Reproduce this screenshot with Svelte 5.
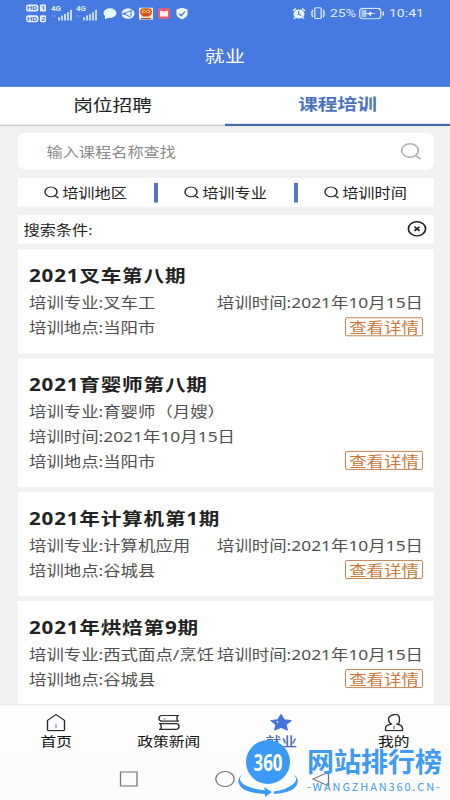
<script lang="ts">
  type Course = { title: string; major: string; date: string; place: string; stacked?: boolean };

  const filters = ['培训地区', '培训专业', '培训时间'];
  const date = '2021年10月15日';

  const courses: Course[] = [
    { title: '2021叉车第八期', major: '叉车工', date, place: '当阳市' },
    { title: '2021育婴师第八期', major: '育婴师（月嫂）', date, place: '当阳市', stacked: true },
    { title: '2021年计算机第1期', major: '计算机应用', date, place: '谷城县' },
    { title: '2021年烘焙第9期', major: '西式面点/烹饪', date, place: '谷城县' }
  ];

  let activeTab = $state(1);
  let activeNav = $state(2);
  const tabs = ['岗位招聘', '课程培训'];
  const nav = ['首页', '政策新闻', '就业', '我的'];
</script>

{#snippet signal()}
  <svg class="signal" width="22" height="20" viewBox="0 0 22 20">
    <text x="0" y="8" font-size="8" font-weight="700" fill="#dcebff">4G</text>
    <path d="M8 19v-4M11 19v-6M14 19v-8M17 19v-10M20 19V6" stroke="#dcebff" stroke-width="1.7" />
    <path d="M1.5 12.5v2M4 12.5v2" stroke="#8db3f5" stroke-width="1" />
  </svg>
{/snippet}

<div class="viewport">
  <div class="screen">
    <header>
      <div class="status">
        <svg class="hd" width="21" height="24" viewBox="0 0 21 24">
          <g fill="#e6f0ff">
            <rect x="0" y="1.5" width="12.5" height="8.5" rx="2.5" />
            <rect x="14" y="1.5" width="6" height="8.5" rx="1.5" />
            <rect x="0" y="14.5" width="12.5" height="8.5" rx="2.5" />
            <rect x="14" y="14.5" width="6" height="8.5" rx="1.5" />
          </g>
          <g fill="#477ae0" font-size="7.5" font-weight="700">
            <text x="1" y="8.5">HD</text><text x="14.9" y="8.5">1</text>
            <text x="1" y="21.5">HD</text><text x="14.9" y="21.5">2</text>
          </g>
        </svg>
        {@render signal()}
        {@render signal()}
        <svg class="app" width="14" height="15" viewBox="0 0 14 15">
          <ellipse cx="7" cy="7" rx="6.5" ry="5.8" fill="#e3fbff" /><path d="M2 10l0 4.5 4-2z" fill="#e3fbff" />
        </svg>
        <svg class="app" width="14" height="15" viewBox="0 0 14 15">
          <circle cx="7" cy="7.5" r="6.5" fill="#e9f4ff" />
          <path d="M3 7.5L10 4M3 7.5l6 4M10 4v7M0 8h4M10 4l2-2" stroke="#477ae0" stroke-width="1.1" fill="none" />
          <circle cx="3.5" cy="7.5" r="1.3" fill="#477ae0" />
        </svg>
        <svg class="app" width="14" height="15" viewBox="0 0 14 15">
          <rect width="14" height="15" fill="#f5e9d3" />
          <path d="M1 5q0-4 4-4h4q4 0 4 4t-3 6H4Q1 9 1 5z" fill="#d45c26" />
          <circle cx="4.7" cy="5" r="2" fill="#ffc65c" /><circle cx="9.3" cy="5" r="2" fill="#ffc65c" />
          <path d="M4 9h6M2 13.5h10" stroke="#c9401f" stroke-width="1.4" />
          <circle cx="5" cy="5" r=".8" fill="#722914" /><circle cx="9" cy="5" r=".8" fill="#722914" />
        </svg>
        <svg class="app mail" width="12" height="15" viewBox="0 0 12 15">
          <rect y="1" width="12" height="13" rx="2.5" fill="#ef5a6d" />
          <path d="M2 4h1l3 1L9 4h1v7H2z" fill="#fff0ee" />
        </svg>
        <svg class="app" width="12" height="15" viewBox="0 0 12 15">
          <path d="M6 .5l5.5 2V8q0 4-5.5 6.7Q.5 12 .5 8V2.5z" fill="#e9fbff" />
          <path d="M3 7.5l2.3 2.5L9 5" stroke="#4a72bb" stroke-width="1.3" fill="none" />
        </svg>

        <svg class="alarm" width="14" height="15" viewBox="0 0 14 15">
          <circle cx="7" cy="8" r="5.5" fill="#eaf6ff" />
          <path d="M1 4l3-2.5M13 4l-3-2.5M3 12.5l-1 1.5M11 12.5l1 1.5" stroke="#eaf6ff" stroke-width="1.6" />
          <path d="M6.7 4.5V8.5l2.5 1.5" stroke="#477ae0" stroke-width="1.2" fill="none" />
        </svg>
        <svg class="vibrate" width="16" height="16" viewBox="0 0 16 16" fill="none" stroke="#dcebff" stroke-width="1.3">
          <rect x="4.8" y="1.5" width="6.4" height="13" rx="1.2" />
          <path d="M2.5 4v2l-1 1 1 1.5-1 1.5 1 1V13M13.5 4v2l1 1-1 1.5 1 1.5-1 1V13" />
        </svg>
        <span class="percent">25%</span>
        <svg class="battery" width="26" height="15" viewBox="0 0 26 15">
          <rect x=".7" y="1.2" width="21" height="12.6" rx="3" fill="none" stroke="#dcebff" stroke-width="1.3" />
          <rect x="2.5" y="3" width="5" height="9" rx="1" fill="#a9c6fa" />
          <path d="M4.5 7.8l6-.8V4.300l2.500 2.500 5 .3-6 1V11l-2.500-2.500z" fill="#fff" />
          <path d="M24.2 5v5" stroke="#dcebff" stroke-width="1.5" />
        </svg>
        <span class="clock">10:41</span>
      </div>
      <h1>就业</h1>
    </header>

    <div class="tabs">
      {#each tabs as tab, i}
        <button class:active={activeTab === i} onclick={() => (activeTab = i)}>{tab}</button>
      {/each}
    </div>

    <main>
      <div class="search">
        <span>输入课程名称查找</span>
        <svg width="22" height="22" viewBox="0 0 22 22" fill="none" stroke="#b4b4b4" stroke-width="1.8">
          <circle cx="10" cy="9.5" r="8.3" /><path d="M15.5 15.5l5 4.5" />
        </svg>
      </div>

      <div class="filters">
        {#each filters as filter, i}
          {#if i > 0}<i class="divider"></i>{/if}
          <button>
            <svg width="15" height="16" viewBox="0 0 15 16" fill="none" stroke="#222" stroke-width="1.4">
              <circle cx="7" cy="7" r="6" /><path d="M11 11.5l3.5 3" />
            </svg>
            {filter}
          </button>
        {/each}
      </div>

      <div class="condition">
        <span>搜索条件:</span>
        <svg width="20" height="20" viewBox="0 0 20 20" fill="none" stroke="#222">
          <circle cx="10" cy="10" r="8.6" stroke-width="1.7" />
          <path d="M7.5 7.5l5 5M12.5 7.5l-5 5" stroke-width="1.9" />
        </svg>
      </div>

      {#each courses as course}
        <article>
          <h2>{course.title}</h2>
          <div class="row">
            <span>培训专业:{course.major}</span>
            {#if !course.stacked}<span>培训时间:{course.date}</span>{/if}
          </div>
          {#if course.stacked}
            <div class="row"><span>培训时间:{course.date}</span></div>
          {/if}
          <div class="row">
            <span>培训地点:{course.place}</span>
            <button class="detail">查看详情</button>
          </div>
        </article>
      {/each}
    </main>

    <nav>
      {#each nav as item, i}
        <button class:active={activeNav === i} onclick={() => (activeNav = i)}>
          <svg width="22" height="22" viewBox="0 0 22 22" fill="none" stroke="#2b2b2b" stroke-width="1.4" stroke-linejoin="round">
            {#if i === 0}
              <path d="M2.5 8.5L11 1.5l8.500 7v11.500q0 1-1 1h-15q-1 0-1-1z" />
              <path d="M11 13v5" stroke="#7da0e8" />
            {:else if i === 1}
              <path d="M21 2.5H4q-3 0-3 3.500t3 3.500h17M19.500 2.500q-1.500 3.500 0 7M1 12.500h17q3 0 3 3.500t-3 3.500H1M2.500 12.500q1.500 3.500 0 7" />
              <path d="M6.5 6v2.5" stroke="#7da0e8" />
            {:else if i === 2}
              <path d="M11 1.5l3 6.300 7 .9-5.100 4.800 1.300 6.800L11 17l-6.200 3.300 1.300-6.800L1 8.700l7-.9z" fill="#4472d8" stroke="#4472d8" />
              <path d="M6.5 10l2 .8" stroke="#fff" stroke-width="1.5" />
            {:else}
              <path d="M8.5 13Q5.500 11 5.500 7t5.500-5.500T16.500 7t-3 6q6 .5 6 5.500V21h-17v-2.500q0-5 6-5.500z" />
              <path d="M11 15v4" stroke="#777" />
            {/if}
          </svg>
          <span>{item}</span>
        </button>
      {/each}
    </nav>

    <div class="system">
      <svg width="20" height="20" viewBox="0 0 20 20"><rect x="1.5" y="1.5" width="16.5" height="17" /></svg>
      <svg width="20" height="20" viewBox="0 0 20 20"><circle cx="10" cy="10" r="9.2" /></svg>
      <svg width="20" height="20" viewBox="0 0 20 20"><path d="M17.5 1.5v17L2 10z" /></svg>
    </div>
  </div>

  <div class="watermark">
    <svg width="60" height="60" viewBox="0 0 60 60">
      <circle cx="30" cy="22" r="22" fill="#3b9af5" />
      <text x="30" y="31" text-anchor="middle" textLength="29" lengthAdjust="spacingAndGlyphs" font-size="24" font-weight="700" fill="#fff">360</text>
      <path d="M5.5 33.5Q-2 39 6 44.500 13 49 27 50.500L26 47 34 52 27 57V54Q10 53 4 48-4 40 5.500 33.500z" fill="#3b9af5" />
      <path d="M54.5 33.5Q62 39 54 45 47 50 36 51.500V54Q51 53 56.500 48 64 40 54.500 33.500z" fill="#3b9af5" />
    </svg>
    <div class="brand">
      <strong>网站排行榜</strong>
      <small>-WANGZHAN360.CN-</small>
    </div>
  </div>
</div>

<style>
  :global(body) {
    background: #fcfcfc;
  }
  .viewport {
    position: relative;
    width: 450px;
    height: 800px;
    overflow: hidden;
    font-family: 'Noto Sans', 'Noto Sans CJK SC', sans-serif;
  }
  /* tall 450x976 phone screen squeezed into 800px */
  .screen {
    display: flex;
    flex-direction: column;
    width: 450px;
    height: 976px;
    transform: scaleY(0.82);
    transform-origin: top;
    background: #fcfcfc;
  }
  button {
    padding: 0;
    border: 0;
    background: none;
    font: inherit;
    color: inherit;
  }
  svg {
    flex: none;
  }

  header {
    flex: none;
    height: 106px;
    background: #477ae0;
    color: #fff;
  }
  .status {
    display: flex;
    align-items: center;
    height: 32px;
    padding-left: 26px;
    color: #e3eeff;
    font-size: 14px;
    font-family: Roboto, sans-serif;
  }
  .signal { margin-left: 3.5px; }
  .app { margin-left: 4px; }
  .signal + .app { margin-left: 5px; }
  .mail { margin: 0 2px 0 5px; }
  .alarm { margin-left: 104px; }
  .vibrate { margin-left: 4px; }
  .percent { margin-left: 4px; width: 28px; }
  .battery { margin-left: 1px; }
  .clock { margin-left: 4px; }
  h1 {
    margin: 19px 0 0;
    font-size: 20px;
    line-height: 36px;
    font-weight: 400;
    text-align: center;
    letter-spacing: .5px;
  }

  .tabs {
    flex: none;
    display: flex;
    height: 47.5px;
    background: #fff;
  }
  .tabs button {
    flex: 1;
    padding-bottom: 2px;
    border-bottom: 2px solid #ccc;
    font-size: 19.7px;
    line-height: 42px;
    color: #222;
  }
  .tabs .active {
    border-bottom: 3px solid #4669ae;
    color: #4a72bd;
    font-weight: 700;
  }

  main {
    flex: none;
    height: 705px;
    box-sizing: border-box;
    padding: 8.5px 16.5px 0 17.5px;
    overflow: hidden;
    background: #f1f1f1;
    font-size: 16.2px;
    color: #222;
  }
  .search {
    display: flex;
    align-items: center;
    justify-content: space-between;
    height: 45px;
    padding: 0 12px 0 29px;
    border-radius: 8px;
    background: #fff;
    color: #8a8a8a;
  }
  .filters {
    display: flex;
    align-items: center;
    height: 35px;
    margin-top: 10px;
    background: #fff;
  }
  .filters button {
    flex: 1;
    display: flex;
    align-items: center;
    justify-content: center;
    gap: 3px;
  }
  .divider {
    width: 4px;
    height: 24px;
    background: #5579b8;
  }
  .condition {
    display: flex;
    align-items: center;
    justify-content: space-between;
    height: 35px;
    margin: 9.5px 0 7px;
    padding: 0 7px 0 6px;
    background: #fff;
  }

  article {
    margin-bottom: 5.5px;
    padding: 14px 10.5px 17.6px 11.5px;
    background: #fff;
  }
  h2 {
    margin: 0;
    font-size: 20.6px;
    line-height: 36px;
    font-weight: 700;
    letter-spacing: .8px;
    color: #222;
  }
  .row {
    display: flex;
    align-items: center;
    justify-content: space-between;
    height: 30px;
    font-size: 17.4px;
    line-height: 28px;
    color: #505050;
    white-space: nowrap;
  }
  .detail {
    box-sizing: border-box;
    width: 78px;
    height: 23px;
    border: 1.2px solid #bd7a45;
    border-radius: 2px;
    line-height: 20px;
    color: #c87838;
  }

  nav {
    flex: none;
    display: flex;
    height: 62px;
    border-top: 1.5px solid #ddd;
    background: #fdfdfd;
  }
  nav button {
    flex: 1;
    display: flex;
    flex-direction: column;
    align-items: center;
    padding-top: 10px;
    font-size: 15.8px;
    line-height: 24px;
    color: #111;
  }
  nav .active {
    color: #4a68a8;
    font-weight: 500;
  }
  .system {
    display: flex;
    flex: 1;
    justify-content: center;
    gap: 76px;
    padding-top: 18px;
    fill: none;
    stroke: #777;
    stroke-width: 1.3;
  }

  /* site mark floating over the bottom bars */
  .watermark {
    position: absolute;
    left: 238px;
    top: 740px;
    display: flex;
    color: #3f9af2;
  }
  .brand {
    display: flex;
    flex-direction: column;
    margin-left: 9px;
    padding-top: 7px;
  }
  .brand strong {
    font-size: 27px;
    line-height: 30px;
    font-weight: 700;
    white-space: nowrap;
  }
  .brand small {
    margin-top: 1px;
    font-family: 'Noto Sans CJK SC', sans-serif;
    font-size: 11px;
    line-height: 16px;
    letter-spacing: 1.85px;
    white-space: nowrap;
  }
</style>
